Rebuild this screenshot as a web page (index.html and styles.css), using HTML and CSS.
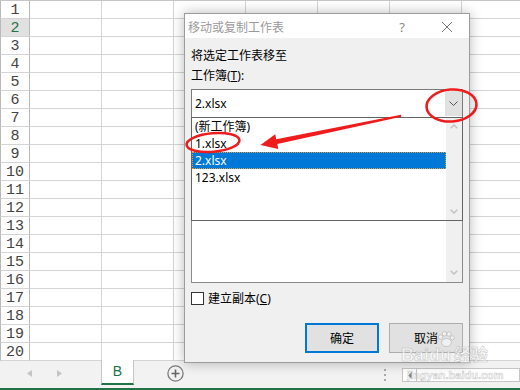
FILE: index.html
```html
<!DOCTYPE html>
<html lang="zh-CN">
<head>
<meta charset="utf-8">
<title>移动或复制工作表</title>
<link rel="stylesheet" href="styles.css">
</head>
<body>
<div class="screen">
  <div class="sheet">
    <div class="rh">1</div><div></div><div></div><div></div><div></div><div></div><div></div><div></div>
    <div class="rh active">2</div><div></div><div></div><div></div><div></div><div></div><div></div><div></div>
    <div class="rh">3</div><div></div><div></div><div></div><div></div><div></div><div></div><div></div>
    <div class="rh">4</div><div></div><div></div><div></div><div></div><div></div><div></div><div></div>
    <div class="rh">5</div><div></div><div></div><div></div><div></div><div></div><div></div><div></div>
    <div class="rh">6</div><div></div><div></div><div></div><div></div><div></div><div></div><div></div>
    <div class="rh">7</div><div></div><div></div><div></div><div></div><div></div><div></div><div></div>
    <div class="rh">8</div><div></div><div></div><div></div><div></div><div></div><div></div><div></div>
    <div class="rh">9</div><div></div><div></div><div></div><div></div><div></div><div></div><div></div>
    <div class="rh">10</div><div></div><div></div><div></div><div></div><div></div><div></div><div></div>
    <div class="rh">11</div><div></div><div></div><div></div><div></div><div></div><div></div><div></div>
    <div class="rh">12</div><div></div><div></div><div></div><div></div><div></div><div></div><div></div>
    <div class="rh">13</div><div></div><div></div><div></div><div></div><div></div><div></div><div></div>
    <div class="rh">14</div><div></div><div></div><div></div><div></div><div></div><div></div><div></div>
    <div class="rh">15</div><div></div><div></div><div></div><div></div><div></div><div></div><div></div>
    <div class="rh">16</div><div></div><div></div><div></div><div></div><div></div><div></div><div></div>
    <div class="rh">17</div><div></div><div></div><div></div><div></div><div></div><div></div><div></div>
    <div class="rh">18</div><div></div><div></div><div></div><div></div><div></div><div></div><div></div>
    <div class="rh">19</div><div></div><div></div><div></div><div></div><div></div><div></div><div></div>
    <div class="rh">20</div><div></div><div></div><div></div><div></div><div></div><div></div><div></div>
  </div>

  <div class="tabbar">
    <div class="nav">
      <svg width="101" height="27" viewBox="0 0 101 27"><polygon points="32,9 27,12.5 32,16" fill="#c4c4c4"/><polygon points="57,9 62,12.5 57,16" fill="#c4c4c4"/></svg>
    </div>
    <div class="tab">B</div>
    <div class="add">
      <svg width="17" height="17" viewBox="0 0 17 17"><circle cx="8.5" cy="8.5" r="7.6" fill="none" stroke="#7a7a7a" stroke-width="1.3"/><path d="M4.5 8.5H12.5M8.5 4.5V12.5" stroke="#666" stroke-width="1.6"/></svg>
    </div>
    <div class="spacer"></div>
    <div class="dots">
      <svg width="4" height="12" viewBox="0 0 4 12"><rect x="1" y="0" width="2" height="2" fill="#aaa"/><rect x="1" y="5" width="2" height="2" fill="#aaa"/><rect x="1" y="10" width="2" height="2" fill="#aaa"/></svg>
    </div>
    <div class="hscroll">
      <div class="hs-left"><svg width="4" height="7" viewBox="0 0 4 7"><polygon points="4,0 0,3.5 4,7" fill="#666"/></svg></div>
      <div class="hs-track"></div>
    </div>
  </div>
  <div class="statusline"></div>

  <div class="dialog">
    <div class="titlebar">
      <span class="title">移动或复制工作表</span>
      <span class="help">?</span>
      <svg class="close" width="10" height="10" viewBox="0 0 10 10"><path d="M0 0L10 10M10 0L0 10" stroke="#777" stroke-width="1"/></svg>
    </div>
    <div class="dbody">
      <div class="line">将选定工作表移至</div>
      <div class="line">工作簿(<u>T</u>):</div>
      <div class="combo">
        <span class="combo-val">2.xlsx</span>
        <span class="combo-btn"><svg width="9" height="5" viewBox="0 0 9 5"><path d="M0.5 0.5L4.5 4.5L8.5 0.5" fill="none" stroke="#555" stroke-width="1"/></svg></span>
        <div class="droplist">
          <div class="items">
            <div class="item">(新工作簿)</div>
            <div class="item">1.xlsx</div>
            <div class="item sel">2.xlsx</div>
            <div class="item">123.xlsx</div>
          </div>
          <div class="vscroll">
            <svg width="8" height="5" viewBox="0 0 8 5"><path d="M0.7 4.3L4 1L7.3 4.3" fill="none" stroke="#c2c2c2" stroke-width="1.5"/></svg>
            <svg width="8" height="5" viewBox="0 0 8 5"><path d="M0.7 0.7L4 4L7.3 0.7" fill="none" stroke="#c2c2c2" stroke-width="1.5"/></svg>
          </div>
        </div>
      </div>
      <div class="sublabel"></div>
      <div class="listbox">
        <div class="lb-items"></div>
        <div class="vscroll lb-scroll">
          <svg width="8" height="5" viewBox="0 0 8 5"><path d="M0.7 0.7L4 4L7.3 0.7" fill="none" stroke="#c2c2c2" stroke-width="1.5"/></svg>
        </div>
      </div>
      <div class="check"><span class="box"></span><span>建立副本(<u>C</u>)</span></div>
      <div class="buttons">
        <button class="btn default">确定</button>
        <button class="btn">取消</button>
      </div>
    </div>
  </div>

  <div class="watermark">
    <svg class="paw" width="18" height="16" viewBox="0 0 18 16"><circle cx="3.5" cy="6" r="2.2"/><circle cx="7.5" cy="2.8" r="2.2"/><circle cx="12" cy="3" r="2.2"/><circle cx="15.3" cy="6.8" r="2"/><ellipse cx="9.5" cy="11.5" rx="4.8" ry="4"/></svg>
    <div class="wm-top"><span>Baidu</span><span class="jy">经验</span></div>
    <div class="wm-url">jingyan.baidu.com</div>
  </div>

  <svg class="annot" width="520" height="390" viewBox="0 0 520 390">
    <ellipse cx="451.5" cy="105.5" rx="25" ry="16" fill="none" stroke="#ee1c1c" stroke-width="2.6" transform="rotate(-4 451.5 105.5)"/>
    <ellipse cx="213" cy="142.5" rx="26.5" ry="9.3" fill="none" stroke="#ee1c1c" stroke-width="2.6" transform="rotate(-5 213 142.5)"/>
    <polygon points="401,114.8 276.2,139.2 275.2,134.2 260.5,145 278.2,149 277.3,143.9 401.3,116.8" fill="#ee1c1c"/>
  </svg>
</div>
</body>
</html>
```

FILE: styles.css
```css
html, body {
  margin: 0;
  padding: 0;
}

body {
  width: 520px;
  height: 390px;
  overflow: hidden;
  background: #fff;
  font-family: "Noto Sans", "Noto Sans CJK SC", sans-serif;
  font-size: 12px;
  color: #000;
}

.screen {
  position: relative;
  width: 520px;
  height: 390px;
  overflow: hidden;
}

/* ---------- worksheet grid ---------- */
.sheet {
  display: grid;
  grid-template-columns: 30px repeat(7, 72px);
  grid-auto-rows: 18px;
  width: 534px;
  border-top: 1px solid #c6c6c6;
}

.sheet > div {
  box-sizing: border-box;
  border-right: 1px solid #d4d4d4;
  border-bottom: 1px solid #d4d4d4;
}

.sheet .rh {
  border-left: 1px solid #b9b9b9;
  border-right-color: #b9b9b9;
  display: flex;
  align-items: center;
  justify-content: center;
  padding-top: 2px;
  font-family: "Liberation Mono", monospace;
  font-size: 15px;
  line-height: 15px;
  color: #444;
}

.sheet .rh.active {
  background: #e1e1e1;
  color: #217346;
}

/* ---------- sheet tabs bar ---------- */
.tabbar {
  display: flex;
  align-items: flex-start;
  height: 27px;
  background: #f2f2f2;
}

.nav {
  width: 101px;
  height: 27px;
  flex: none;
}

.nav svg {
  display: block;
}

.tab {
  flex: none;
  box-sizing: border-box;
  width: 33px;
  height: 25px;
  margin-top: -1px;
  background: #fff;
  border-left: 1px solid #c6c6c6;
  border-right: 1px solid #c6c6c6;
  border-bottom: 2px solid #217346;
  text-align: center;
  font-family: "Liberation Sans", sans-serif;
  font-size: 14px;
  line-height: 22px;
  color: #217346;
}

.add {
  flex: none;
  margin-left: 33px;
  margin-top: 4px;
  height: 17px;
}

.add svg {
  display: block;
}

.spacer {
  flex: 1;
}

.dots {
  flex: none;
  width: 4px;
  margin-top: 8px;
  margin-right: 15px;
}

.dots svg {
  display: block;
}

.hscroll {
  flex: none;
  box-sizing: border-box;
  width: 118px;
  height: 14px;
  margin-top: 7px;
  border: 1px solid #c6c6c6;
  background: #fff;
  display: flex;
}

.hs-left {
  width: 13px;
  border-right: 1px solid #c6c6c6;
  display: flex;
  align-items: center;
  justify-content: center;
}

.hs-left svg {
  display: block;
}

.hs-track {
  flex: 1;
}

.statusline {
  height: 2px;
  background: #217346;
}

/* ---------- dialog ---------- */
.dialog {
  position: absolute;
  left: 184px;
  top: 13px;
  width: 286px;
  box-sizing: border-box;
  border: 1px solid #9c9c9c;
  background: #f0f0f0;
  box-shadow: 0 0 12px rgba(0, 0, 0, 0.28);
  z-index: 2;
}

.titlebar {
  height: 24px;
  background: #fff;
  display: flex;
  align-items: center;
  padding-left: 3px;
}

.title {
  flex: 1;
  color: #9a9a9a;
  font-size: 12px;
  line-height: 14px;
  padding-top: 3px;
}

.help {
  color: #8a8a8a;
  font-size: 13px;
  line-height: 14px;
  padding-top: 2px;
  margin-right: 37px;
}

.close {
  display: block;
  margin-right: 17px;
  margin-top: 2px;
}

.dbody {
  padding: 8px 6px 9px;
}

.line {
  height: 20px;
  line-height: 20px;
  white-space: nowrap;
}

.combo {
  position: relative;
  box-sizing: border-box;
  height: 29px;
  margin-top: 3px;
  border: 1px solid #7a7a7a;
  background: #fff;
  display: flex;
  align-items: center;
}

.combo-val {
  flex: 1;
  padding-left: 3px;
}

.combo-btn {
  width: 17px;
  align-self: stretch;
  margin: 1px 0;
  background: #e1e1e1;
  display: flex;
  align-items: center;
  justify-content: center;
}

.combo-btn svg {
  display: block;
}

.droplist {
  position: absolute;
  left: -1px;
  top: 27px;
  width: 272px;
  height: 104px;
  box-sizing: border-box;
  border: 1px solid #646464;
  background: #fff;
  display: flex;
  z-index: 3;
}

.items {
  flex: 1;
}

.item {
  height: 17px;
  line-height: 17px;
  padding-left: 3px;
  white-space: nowrap;
}

.item.sel {
  background: #0078d7;
  color: #fff;
  outline: 1px dotted #d9a04a;
  outline-offset: -1px;
}

.vscroll {
  width: 16px;
  background: #f0f0f0;
  display: flex;
  flex-direction: column;
  justify-content: space-between;
  align-items: center;
  padding: 6px 0;
}

.vscroll svg {
  display: block;
}

.sublabel {
  height: 20px;
  margin-top: 6px;
}

.listbox {
  box-sizing: border-box;
  height: 139px;
  border: 1px solid #8a8a8a;
  background: #fff;
  display: flex;
}

.lb-items {
  flex: 1;
}

.lb-scroll {
  justify-content: flex-end;
  padding: 0 0 7px;
}

.check {
  display: flex;
  align-items: center;
  height: 14px;
  margin-top: 8px;
  white-space: nowrap;
}

.box {
  width: 13px;
  height: 13px;
  box-sizing: border-box;
  border: 1px solid #333;
  background: #fff;
  margin-right: 4px;
}

.buttons {
  display: flex;
  justify-content: flex-end;
  gap: 10px;
  margin-top: 18px;
}

.btn {
  width: 74px;
  height: 30px;
  box-sizing: border-box;
  border: 1px solid #adadad;
  background: #e1e1e1;
  font: inherit;
  color: #000;
  padding: 0;
}

.btn.default {
  border: 2px solid #0078d7;
}

/* ---------- watermark ---------- */
.watermark {
  position: absolute;
  left: 401px;
  top: 331px;
  width: 100px;
  z-index: 4;
  color: rgba(255, 255, 255, 0.55);
  -webkit-text-stroke: 0.6px rgba(150, 150, 150, 0.5);
  pointer-events: none;
}

.paw {
  display: block;
  margin-left: 36px;
  fill: rgba(255, 255, 255, 0.55);
  stroke: rgba(150, 150, 150, 0.5);
  stroke-width: 0.8;
}

.wm-top {
  display: flex;
  align-items: baseline;
  margin-top: -1px;
  font-family: "Liberation Sans", sans-serif;
  font-weight: bold;
  font-size: 18px;
  line-height: 16px;
  white-space: nowrap;
}

.jy {
  font-family: "Noto Sans CJK SC", sans-serif;
  font-size: 17px;
  margin-left: 3px;
}

.wm-url {
  margin-top: 7px;
  margin-left: 6px;
  font-family: "Liberation Sans", sans-serif;
  font-size: 11px;
  line-height: 11px;
  font-weight: bold;
  white-space: nowrap;
}

/* ---------- annotations ---------- */
.annot {
  position: absolute;
  left: 0;
  top: 0;
  z-index: 5;
  pointer-events: none;
}
```
